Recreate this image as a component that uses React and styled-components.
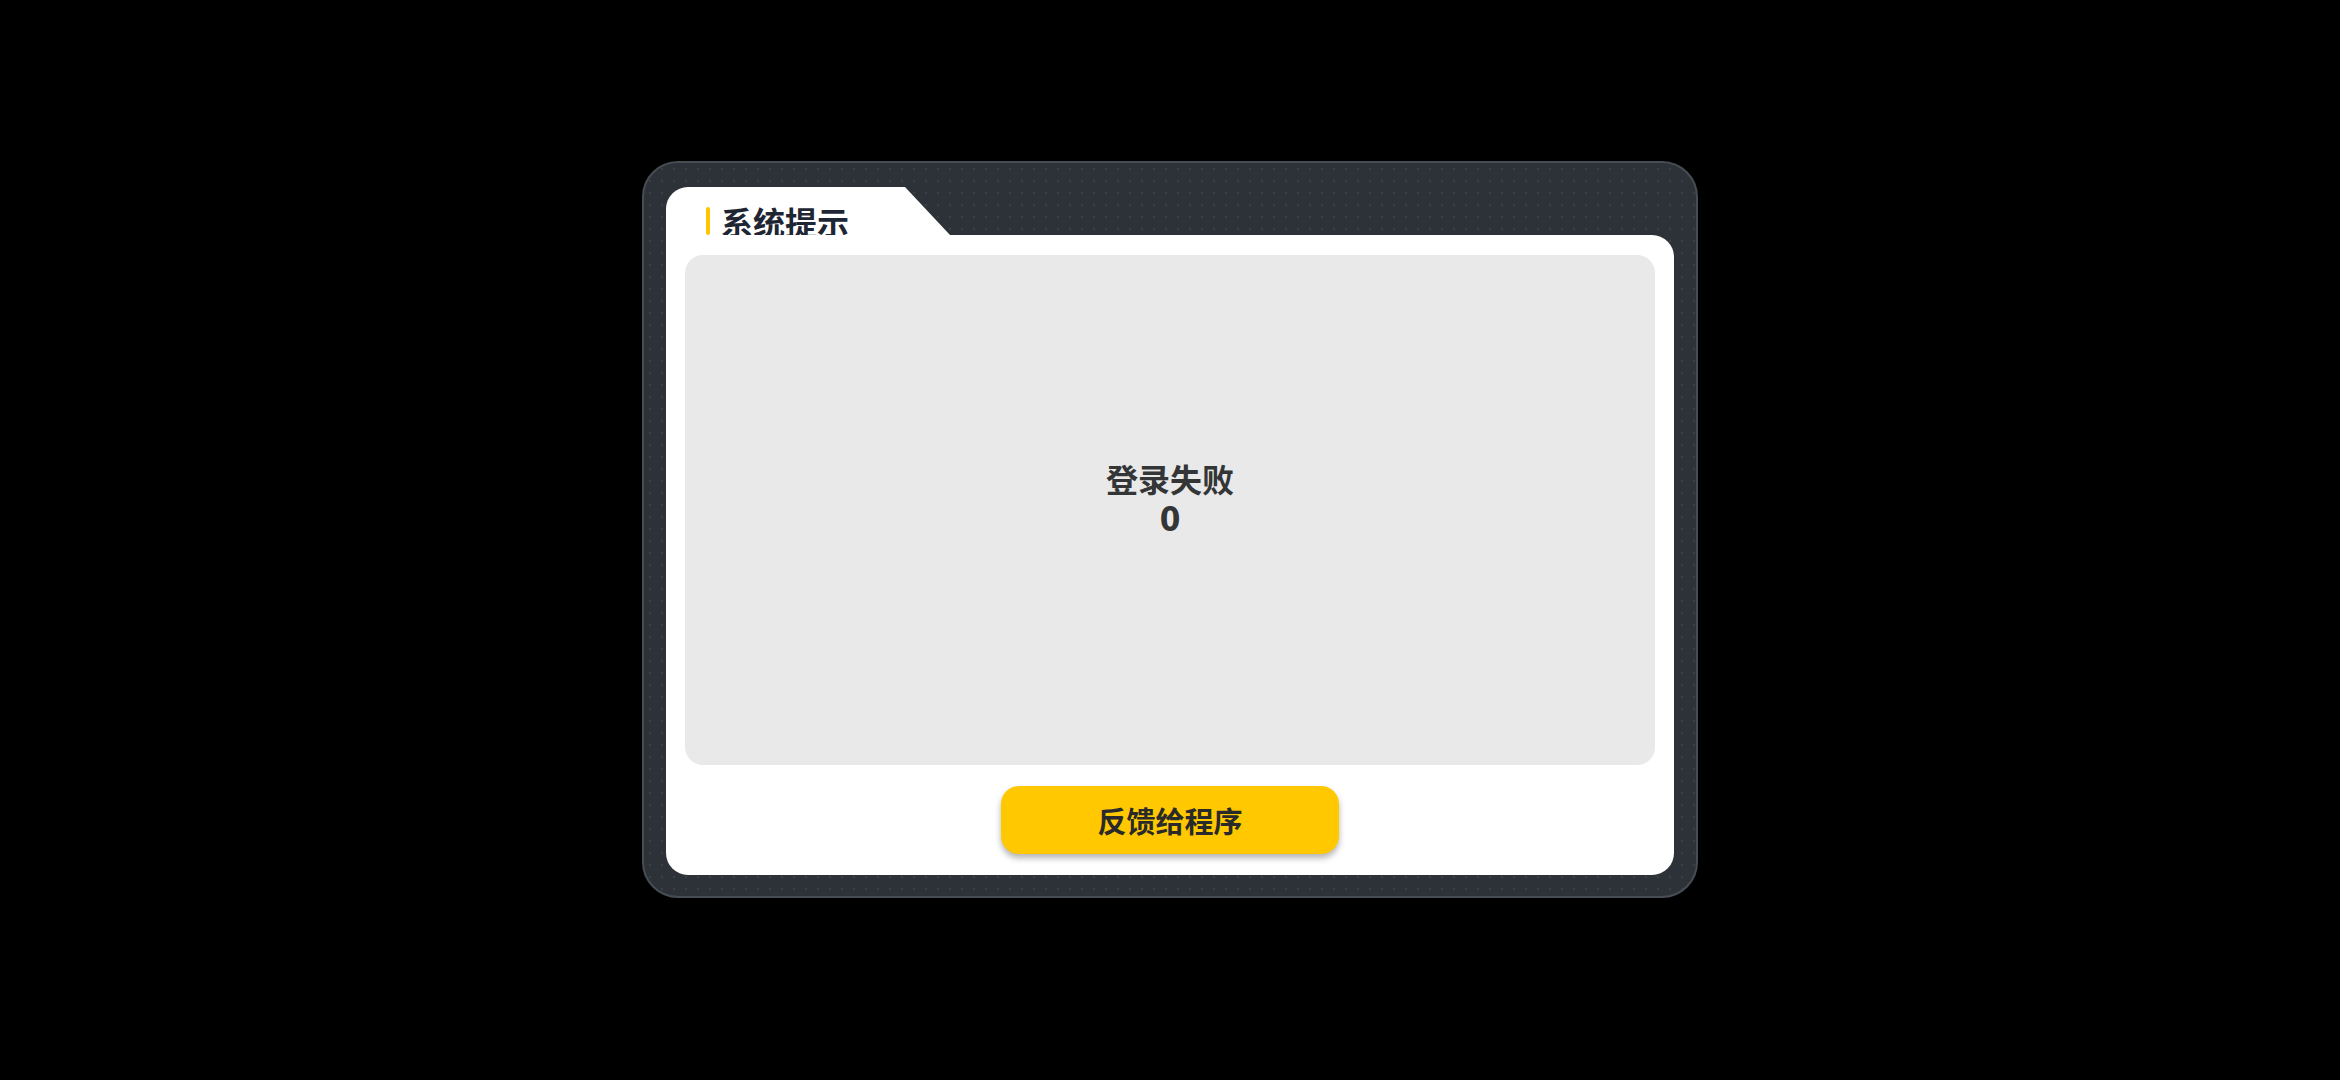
import React from "react";
import styled, { createGlobalStyle } from "styled-components";

const GlobalStyle = createGlobalStyle`
  html, body {
    margin: 0;
    padding: 0;
    background: #000;
  }
  body {
    font-family: "Noto Sans CJK SC", "Noto Sans", sans-serif;
  }
`;

const Page = styled.div`
  width: 100%;
  min-height: 100vh;
  display: flex;
  align-items: center;
  justify-content: center;
  padding-bottom: 21px;
  box-sizing: border-box;
`;

const Frame = styled.div`
  width: 1056px;
  height: 737px;
  box-sizing: border-box;
  border: 2px solid #474d55;
  border-radius: 36px;
  padding: 24px 22px 21px 22px;
  background-color: #2c3238;
  background-image: radial-gradient(
    rgba(255, 255, 255, 0.07) 1px,
    transparent 1.6px
  );
  background-size: 12px 12px;
  display: flex;
  flex-direction: column;
`;

const Tab = styled.div`
  width: 284px;
  height: 48px;
  flex-shrink: 0;
  background: #fff;
  border-top-left-radius: 22px;
  clip-path: polygon(0 0, 239px 0, 100% 100%, 0 100%);
  display: flex;
  align-items: flex-end;
  padding-left: 40px;
  box-sizing: border-box;
`;

const TitleMark = styled.span`
  width: 4px;
  height: 28px;
  border-radius: 2px;
  background: #ffc400;
  margin-right: 11px;
`;

const Title = styled.h2`
  margin: 0;
  font-size: 32px;
  line-height: 32px;
  font-weight: 700;
  color: #1f2633;
  transform: translateY(2px);
`;

const Panel = styled.div`
  flex: 1;
  background: #fff;
  border-radius: 0 22px 22px 22px;
  padding: 20px 19px 21px 19px;
  display: flex;
  flex-direction: column;
  align-items: center;
  gap: 21px;
`;

const MessageBox = styled.div`
  align-self: stretch;
  height: 510px;
  background: #e8e9e8;
  border-radius: 18px;
  display: flex;
  flex-direction: column;
  align-items: center;
  justify-content: center;
  padding-bottom: 22px;
  box-sizing: border-box;
`;

const MessageLine = styled.div`
  font-size: ${(p) => (p.digit ? "33px" : "32px")};
  line-height: 42px;
  font-weight: 700;
  color: #333536;
  font-stretch: ${(p) => (p.digit ? "condensed" : "normal")};
  font-family: ${(p) =>
    p.digit
      ? `"DejaVu Sans Condensed", "DejaVu Sans", "Noto Sans CJK SC", sans-serif`
      : `"Noto Sans CJK SC", "Noto Sans", sans-serif`};
`;

const FeedbackButton = styled.button`
  width: 338px;
  height: 68px;
  border: none;
  border-radius: 18px;
  background: #ffc800;
  box-shadow: 0 4px 6px rgba(0, 0, 0, 0.3);
  font-family: "Noto Sans CJK SC", "Noto Sans", sans-serif;
  font-size: 29px;
  font-weight: 700;
  color: #2a2a2a;
  cursor: pointer;
`;

const App = () => {
  return (
    <>
      <GlobalStyle />
      <Page>
        <Frame>
          <Tab>
            <TitleMark />
            <Title>系统提示</Title>
          </Tab>
          <Panel>
            <MessageBox>
              <MessageLine>登录失败</MessageLine>
              <MessageLine digit>0</MessageLine>
            </MessageBox>
            <FeedbackButton>反馈给程序</FeedbackButton>
          </Panel>
        </Frame>
      </Page>
    </>
  );
};

export default App;
